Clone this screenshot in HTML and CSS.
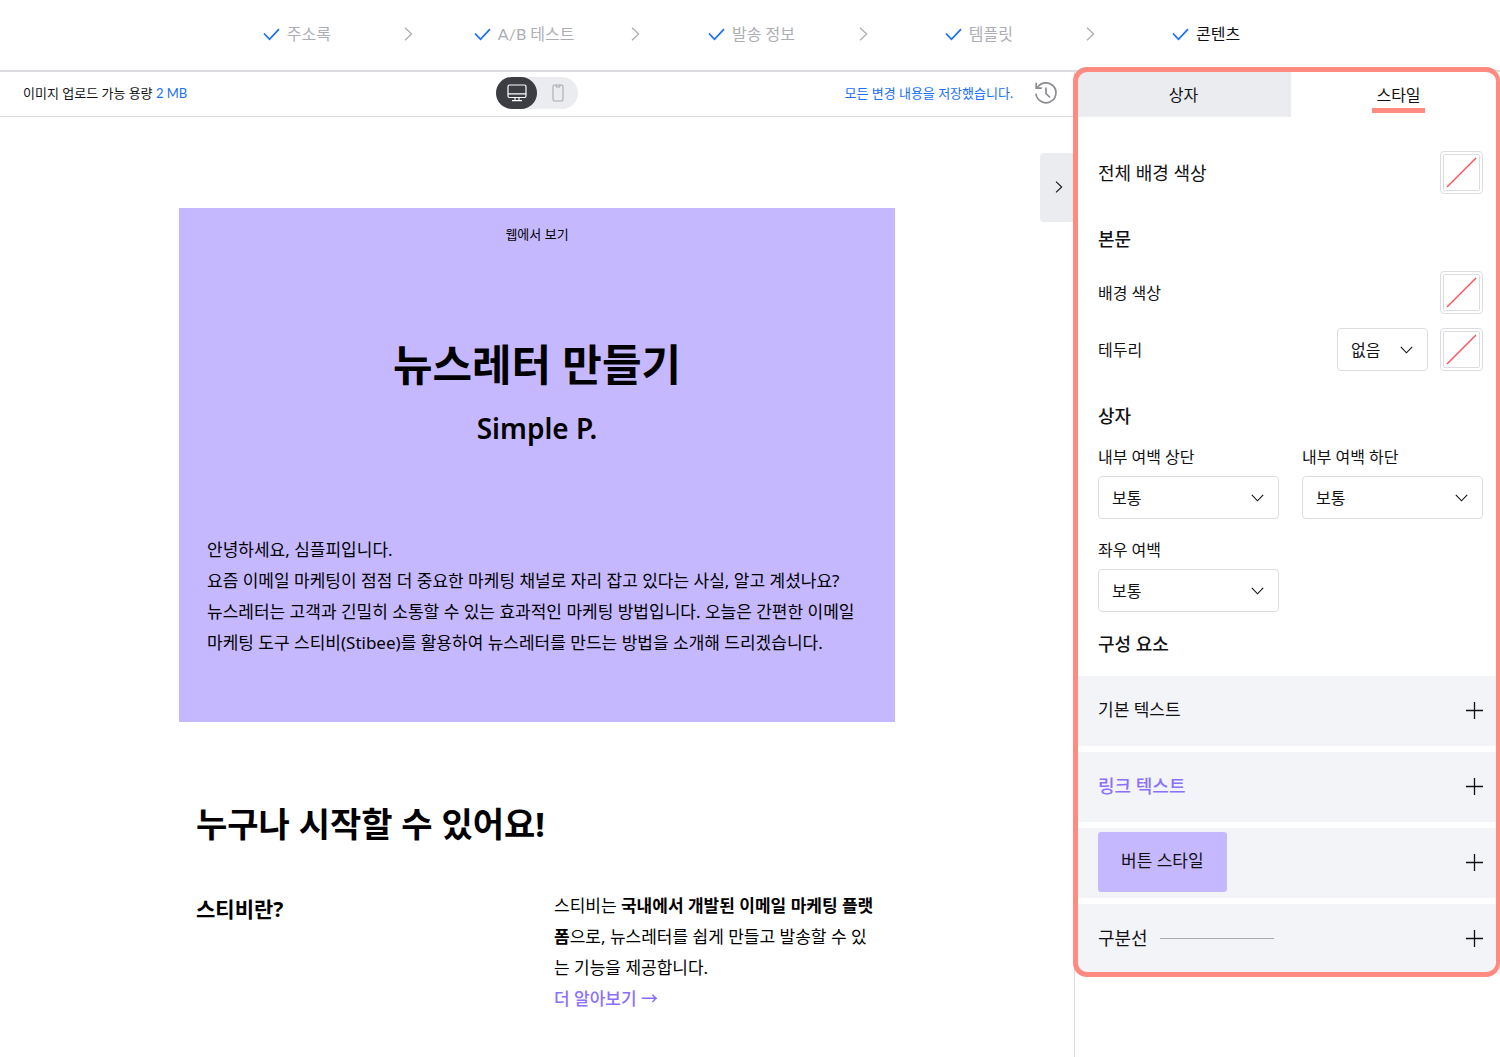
FILE: index.html
```html
<!DOCTYPE html>
<html lang="ko">
<head>
<meta charset="utf-8">
<meta name="viewport" content="width=device-width, initial-scale=1">
<title>콘텐츠 - 스티비</title>
<link rel="stylesheet" href="styles.css">
</head>
<body>
<svg class="defs" width="0" height="0" aria-hidden="true">
  <symbol id="check" viewBox="0 0 17 13"><path d="M1 5.5 6.5 11.3 16 1.2" fill="none" stroke="currentColor" stroke-width="1.8"/></symbol>
  <symbol id="right" viewBox="0 0 9 14"><path d="M1 .8 7.6 7 1 13.2" fill="none" stroke="currentColor" stroke-width="1.3"/></symbol>
  <symbol id="down" viewBox="0 0 13 8"><path d="M.8 .8 6.5 6.8 12.2 .8" fill="none" stroke="currentColor" stroke-width="1.1"/></symbol>
  <symbol id="plus" viewBox="0 0 17 17"><path d="M8.5 0V17M0 8.5H17" fill="none" stroke="currentColor" stroke-width="1.3"/></symbol>
  <symbol id="none" viewBox="0 0 35 35"><path d="M3 32 32 3" fill="none" stroke="#ff4f5a" stroke-width="1.5"/></symbol>
</svg>

<header class="header">
  <ol class="steps">
    <li class="step"><svg class="check"><use href="#check"/></svg>주소록</li>
    <li class="divider" aria-hidden="true"><svg class="arrow"><use href="#right"/></svg></li>
    <li class="step"><svg class="check"><use href="#check"/></svg>A/B 테스트</li>
    <li class="divider" aria-hidden="true"><svg class="arrow"><use href="#right"/></svg></li>
    <li class="step"><svg class="check"><use href="#check"/></svg>발송 정보</li>
    <li class="divider" aria-hidden="true"><svg class="arrow"><use href="#right"/></svg></li>
    <li class="step"><svg class="check"><use href="#check"/></svg>템플릿</li>
    <li class="divider" aria-hidden="true"><svg class="arrow"><use href="#right"/></svg></li>
    <li class="step current"><svg class="check"><use href="#check"/></svg>콘텐츠</li>
  </ol>
</header>

<div class="editor">
  <main class="workspace">
    <div class="toolbar">
      <p class="quota">이미지 업로드 가능 용량 <span class="blue">2 MB</span></p>
      <div class="devices">
        <button class="device active" type="button" aria-label="데스크톱">
          <svg width="20" height="18" viewBox="0 0 20 18" fill="none" stroke="#fff" stroke-width="1.2"><rect x="1" y="1" width="18" height="12.5" rx="1.5"/><path d="M1 9.8H19M8 13.5V16M12 13.5V16M5 16.6H15"/></svg>
        </button>
        <button class="device" type="button" aria-label="모바일">
          <svg width="12" height="18" viewBox="0 0 12 18" fill="none" stroke="#a9aab0" stroke-width="1.1"><rect x="1" y="1" width="10" height="16" rx="1.5"/><path d="M3.8 1.2 4.6 3H7.4L8.2 1.2"/></svg>
        </button>
      </div>
      <div class="status">
        <span class="blue">모든 변경 내용을 저장했습니다.</span>
        <button class="history" type="button" aria-label="변경 이력">
          <svg width="24" height="24" viewBox="0 0 24 24" fill="none" stroke="#8b8c91" stroke-width="1.7"><path d="M3.2 7A10 10 0 1 1 2 12.5M2.2 1.8V7.2H7.8M12 6.5V12.5L16 16.5"/></svg>
        </button>
      </div>
    </div>

    <div class="canvas">
      <button class="collapse" type="button" aria-label="패널 접기"><svg class="mini"><use href="#right"/></svg></button>
      <article class="mail">
        <section class="hero">
          <a class="weblink" href="#web">웹에서 보기</a>
          <h1>뉴스레터 만들기</h1>
          <h2>Simple P.</h2>
          <p>안녕하세요, 심플피입니다.<br>요즘 이메일 마케팅이 점점 더 중요한 마케팅 채널로 자리 잡고 있다는 사실, 알고 계셨나요?<br>뉴스레터는 고객과 긴밀히 소통할 수 있는 효과적인 마케팅 방법입니다. 오늘은 간편한 이메일<br>마케팅 도구 스티비(Stibee)를 활용하여 뉴스레터를 만드는 방법을 소개해 드리겠습니다.</p>
        </section>
        <h2 class="headline">누구나 시작할 수 있어요!</h2>
        <section class="columns">
          <h3>스티비란?</h3>
          <div>
            <p>스티비는 <strong>국내에서 개발된 이메일 마케팅 플랫<br>폼</strong>으로, 뉴스레터를 쉽게 만들고 발송할 수 있<br>는 기능을 제공합니다.</p>
            <a class="more" href="#more">더 알아보기 →</a>
          </div>
        </section>
      </article>
    </div>
  </main>

  <aside class="side">
    <div class="panel">
      <div class="tabs">
        <button class="tab" type="button">상자</button>
        <button class="tab selected" type="button"><span>스타일</span></button>
      </div>
      <div class="settings">
        <div class="field last">
          <span class="large">전체 배경 색상</span>
          <button class="swatch" type="button" aria-label="전체 배경 색상"><svg><use href="#none"/></svg></button>
        </div>
        <h2>본문</h2>
        <div class="field">
          <span>배경 색상</span>
          <button class="swatch" type="button" aria-label="배경 색상"><svg><use href="#none"/></svg></button>
        </div>
        <div class="field last">
          <label for="border">테두리</label>
          <div class="controls">
            <div class="select short"><select id="border"><option>없음</option></select><svg><use href="#down"/></svg></div>
            <button class="swatch" type="button" aria-label="테두리 색상"><svg><use href="#none"/></svg></button>
          </div>
        </div>
        <h2>상자</h2>
        <div class="spacing">
          <div class="option">
            <label for="top">내부 여백 상단</label>
            <div class="select"><select id="top"><option>보통</option></select><svg><use href="#down"/></svg></div>
          </div>
          <div class="option">
            <label for="bottom">내부 여백 하단</label>
            <div class="select"><select id="bottom"><option>보통</option></select><svg><use href="#down"/></svg></div>
          </div>
          <div class="option">
            <label for="sides">좌우 여백</label>
            <div class="select"><select id="sides"><option>보통</option></select><svg><use href="#down"/></svg></div>
          </div>
        </div>
        <h2>구성 요소</h2>
      </div>
      <ul class="parts">
        <li><span class="sample">기본 텍스트</span><button class="add" type="button" aria-label="기본 텍스트 펼치기"><svg><use href="#plus"/></svg></button></li>
        <li><span class="sample link">링크 텍스트</span><button class="add" type="button" aria-label="링크 텍스트 펼치기"><svg><use href="#plus"/></svg></button></li>
        <li><span class="sample filled">버튼 스타일</span><button class="add" type="button" aria-label="버튼 스타일 펼치기"><svg><use href="#plus"/></svg></button></li>
        <li><span class="large rule">구분선</span><button class="add" type="button" aria-label="구분선 펼치기"><svg><use href="#plus"/></svg></button></li>
      </ul>
    </div>
  </aside>
</div>
</body>
</html>
```
FILE: styles.css
```css
* { box-sizing: border-box; }

body {
  margin: 0;
  min-height: 100vh;
  display: flex;
  flex-direction: column;
  overflow-x: hidden;
  background: #fff;
  color: #111114;
  font: 16px/24px Lato, "Noto Sans CJK KR", sans-serif;
}

h1, h2, h3, p, ol, ul { margin: 0; padding: 0; }
ol, ul { list-style: none; }
svg { display: block; flex: none; }
.defs { position: absolute; }

button {
  border: 0;
  padding: 0;
  background: none;
  color: inherit;
  font: inherit;
  cursor: pointer;
  display: flex;
  align-items: center;
  justify-content: center;
}

.blue { color: #1a70f8; }

/* Progress steps */
.header {
  height: 72px;
  padding: 0 0 2px 3px;
  border-bottom: 2px solid #dbdbe0;
  display: flex;
  align-items: center;
  justify-content: center;
}
.steps {
  width: 100%;
  max-width: 1023px;
  display: grid;
  grid-template-columns: repeat(9, 1fr);
}
.step, .divider {
  display: flex;
  align-items: center;
  justify-content: center;
  white-space: nowrap;
}
.divider { padding-right: 4px; }
.step { gap: 7px; color: #adaeb3; }
.step.current { color: #111114; }
.check { width: 17px; height: 13px; color: #1a6fff; }
.arrow { width: 9px; height: 14px; color: #adaeb3; }

/* Editor frame */
.editor { flex: 1; display: flex; }
.workspace { flex: 1; min-width: 0; }

.toolbar {
  height: 45px;
  padding: 0 16px 2px;
  border-bottom: 1px solid #dbdbe0;
  display: grid;
  grid-template-columns: 1fr auto 1fr;
  align-items: center;
  font-size: 13px;
}
.quota { padding-left: 7px; }
.devices {
  display: flex;
  border-radius: 16px;
  background: #ebecf0;
}
.device { width: 41px; height: 32px; border-radius: 16px; }
.device.active { background: #3c3d42; }
.status {
  display: flex;
  align-items: center;
  justify-content: flex-end;
  gap: 21px;
}

.canvas { position: relative; padding: 91px 16px 40px; }
.collapse {
  position: absolute;
  top: 36px;
  right: 0;
  width: 34px;
  height: 69px;
  padding: 0 0 2px 4px;
  border-radius: 4px 0 0 4px;
  background: #ebecf0;
}
.mini { width: 8px; height: 12px; }

/* Newsletter */
.mail {
  max-width: 716px;
  margin: 0 auto;
  color: #000;
  font: 17px/31px "Noto Sans", "Noto Sans CJK KR", sans-serif;
}
.hero { padding: 16px 28px 64px; background: #c5b8ff; text-align: center; }
.hero p { margin-top: 84px; text-align: left; }
.weblink {
  display: block;
  color: inherit;
  font-size: 13px;
  line-height: 20px;
  text-decoration: none;
}
h1 { margin-top: 89px; font-size: 43px; line-height: 64px; }
.hero h2 { margin-top: 9px; font-size: 28px; line-height: 44px; font-weight: 600; }
.headline { margin: 76px 17px 40px; font-size: 34px; line-height: 52px; }
.columns { display: grid; grid-template-columns: 1fr 1fr; }
.columns > * { padding: 0 17px; }
.columns p { white-space: nowrap; }
h3 { font-size: 21px; line-height: 38px; }
.more { color: #8b70ff; font-weight: 500; text-decoration: none; }

/* Style panel */
.side { width: 426px; padding-left: 1px; border-left: 1px solid #dbdbe0; }
.panel { position: relative; }
.panel::after {
  content: "";
  position: absolute;
  inset: -5px 0 -3px -3px;
  border: 5px solid #ff8a80;
  border-right-width: 4px;
  border-radius: 14px;
  pointer-events: none;
}
.tabs { display: grid; grid-template-columns: 215px 1fr; height: 45px; }
.tab { background: #ebecf0; }
.tab.selected { padding-left: 6px; background: #fff; }
.tab span {
  padding: 7px 4px 1px;
  border-bottom: 5px solid #ff8a80;
}
.settings { padding: 34px 17px 20px 22px; }
.settings h2 { margin-bottom: 20px; font-size: 18px; line-height: 24px; font-weight: 500; }
.settings h2:last-child { margin-bottom: 0; }
.large { font-size: 18px; }
.field {
  display: flex;
  align-items: center;
  justify-content: space-between;
  margin-bottom: 14px;
}
.field.last { margin-bottom: 33px; }
.controls { display: flex; gap: 12px; }
.swatch {
  width: 43px;
  height: 43px;
  padding: 2px;
  border: 1px solid #dcdde1;
  border-radius: 4px;
}
.swatch svg { width: 37px; height: 37px; border: 1px solid #dcdde1; border-radius: 2px; }

.select { position: relative; }
.select select {
  appearance: none;
  width: 100%;
  height: 43px;
  padding: 0 14px 0 13px;
  border: 1px solid #dcdde1;
  border-radius: 4px;
  background: #fff;
  color: inherit;
  font: inherit;
}
.select svg {
  position: absolute;
  right: 15px;
  top: 18px;
  width: 13px;
  height: 8px;
  pointer-events: none;
}
.short { width: 91px; }
.spacing {
  display: grid;
  grid-template-columns: 1fr 1fr;
  gap: 19px 23px;
  margin: -3px 0 20px;
}
.option label { display: block; margin-bottom: 7px; }

.parts { display: grid; gap: 6px; }
.parts li {
  height: 70px;
  padding: 0 17px 2px 22px;
  display: flex;
  align-items: center;
  justify-content: space-between;
  background: #f3f4f8;
}
.sample { font-size: 17px; font-family: "Noto Sans", "Noto Sans CJK KR", sans-serif; }
.sample.link { color: #8b70ff; font-size: 18px; font-weight: 500; }
.filled {
  padding: 17px 23px 19px;
  border-radius: 3px;
  background: #c5b8ff;
}
.rule { display: flex; align-items: center; gap: 12px; }
.rule::after { content: ""; width: 114px; height: 1px; background: #aaabaf; }
.add svg { width: 17px; height: 17px; }
```
